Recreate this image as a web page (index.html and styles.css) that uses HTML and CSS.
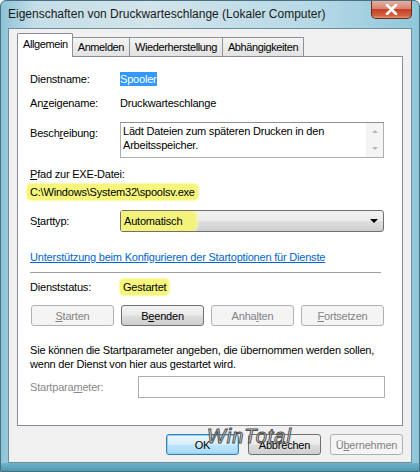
FILE: index.html
```html
<!DOCTYPE html>
<html>
<head>
    <link rel="stylesheet" href="styles.css">
</head>
<body>
    <div class="window">
        <div class="titlebar">
            <span class="title">Eigenschaften von Druckwarteschlange (Lokaler Computer)</span>
            <button class="close-btn">
                <svg width="13" height="11" viewBox="0 0 13 11">
                    <path d="M2 1 L11 10 M11 1 L2 10" stroke="#fff" stroke-width="2.6" stroke-linecap="round"/>
                </svg>
            </button>
        </div>

        <div class="client">
            <div class="tabs">
                <div class="tab active">Allgemein</div>
                <div class="tab">Anmelden</div>
                <div class="tab">Wiederherstellung</div>
                <div class="tab">Abhängigkeiten</div>
            </div>

            <div class="panel">
                <div class="row row-name">
                    <span class="label">Dienstname:</span>
                    <span class="value"><span class="selected">Spooler</span></span>
                </div>
                <div class="row row-display">
                    <span class="label">An<u>z</u>eigename:</span>
                    <span class="value">Druckwarteschlange</span>
                </div>
                <div class="row row-desc">
                    <span class="label">Besch<u>r</u>eibung:</span>
                    <div class="textbox">
                        <div class="textbox-text">Lädt Dateien zum späteren Drucken in den Arbeitsspeicher.</div>
                        <div class="scrollbar">
                            <span class="arrow up"></span>
                            <span class="arrow down"></span>
                        </div>
                    </div>
                </div>

                <div class="path-label"><u>P</u>fad zur EXE-Datei:</div>
                <div class="path-value"><span class="marker">C:\Windows\System32\spoolsv.exe</span></div>

                <div class="row row-start">
                    <span class="label">S<u>t</u>arttyp:</span>
                    <div class="combo">
                        <span class="combo-text">Automatisch</span>
                        <span class="combo-arrow"></span>
                    </div>
                </div>

                <a class="help-link" href="#">Unterstützung beim Konfigurieren der Startoptionen für Dienste</a>
                <div class="separator"></div>

                <div class="row row-status">
                    <span class="label">Dienststatus:</span>
                    <span class="value"><span class="marker">Gestartet</span></span>
                </div>

                <div class="service-buttons">
                    <button class="btn disabled"><u>S</u>tarten</button>
                    <button class="btn">B<u>e</u>enden</button>
                    <button class="btn disabled">Anha<u>l</u>ten</button>
                    <button class="btn disabled"><u>F</u>ortsetzen</button>
                </div>

                <p class="hint">Sie können die Startparameter angeben, die übernommen werden sollen, wenn der Dienst von hier aus gestartet wird.</p>

                <div class="row row-param">
                    <span class="label disabled-text">Startpara<u>m</u>eter:</span>
                    <div class="input"></div>
                </div>
            </div>

            <div class="dialog-buttons">
                <button class="btn default">OK</button>
                <button class="btn">Abbrechen</button>
                <button class="btn disabled">Ü<u>b</u>ernehmen</button>
            </div>
        </div>

        <div class="watermark">WinTotal</div>
    </div>
</body>
</html>
```

FILE: styles.css
```css
body {
    margin: 0;
    font-family: "Liberation Sans", Arial, sans-serif;
    font-size: 12px;
    color: #000;
}
.window {
    position: relative;
    width: 420px;
    height: 472px;
    box-sizing: border-box;
    padding: 0 7px 8px 7px;
    background: linear-gradient(90deg, #8cc3d6 0%, #c4dee8 8%, #d3e4ea 35%, #b6d9e6 75%, #8fc7da 100%);
    border: 1px solid #4a6f80;
    border-radius: 6px 6px 0 0;
    display: flex;
    flex-direction: column;
    overflow: hidden;
}
.window::after {
    content: "";
    position: absolute;
    left: 0;
    right: 0;
    bottom: 0;
    height: 8px;
    background: linear-gradient(180deg, #6fb4c9, #4f97b0);
}
.titlebar {
    height: 27px;
    display: flex;
    align-items: flex-start;
    justify-content: space-between;
}
.title {
    margin-top: 6px;
    font-size: 12px;
    color: #1a1a1a;
}
.close-btn {
    width: 41px;
    height: 18px;
    margin-right: 0;
    border: 1px solid #6b2a20;
    border-top: none;
    border-radius: 0 0 5px 5px;
    background: linear-gradient(180deg, #e6b0a2 0%, #d98571 45%, #c5412a 50%, #d0603f 85%, #e39a6e 100%);
    display: flex;
    align-items: center;
    justify-content: center;
    padding: 0;
}
.client {
    flex: 1;
    background: #f0f0f0;
    border: 1px solid #6d8e9b;
    padding: 4px 8px 0 8px;
    display: flex;
    flex-direction: column;
    position: relative;
    z-index: 1;
    font-size: 11px;
    letter-spacing: -0.2px;
}
.tabs {
    display: flex;
    align-items: flex-end;
    height: 23px;
    position: relative;
    z-index: 2;
    letter-spacing: -0.4px;
}
.tab {
    height: 18px;
    line-height: 18px;
    padding: 0 5px;
    border: 1px solid #8e9198;
    border-bottom: none;
    margin-left: -1px;
    background: linear-gradient(180deg, #f4f4f4, #e2e2e2);
    color: #000;
}
.tab.active {
    height: 23px;
    line-height: 20px;
    margin-left: 0;
    margin-bottom: -1px;
    padding: 0 4px 0 5px;
    background: #fff;
    border-color: #898c95;
    border-radius: 2px 2px 0 0;
}
.panel {
    height: 370px;
    box-sizing: border-box;
    background: #fff;
    border: 1px solid #898c95;
    padding: 14px 18px 0 12px;
}
.row {
    display: flex;
    align-items: center;
}
.label {
    width: 90px;
    flex: none;
    line-height: 16px;
}
.value {
    line-height: 16px;
}
.row-display {
    margin-top: 8px;
}
.selected {
    background: #3399ff;
    color: #fff;
    padding: 1px 0;
}
.row-desc {
    margin-top: 11px;
    align-items: flex-start;
}
.row-desc .label {
    margin-top: 3px;
}
.textbox {
    flex: 1;
    height: 36px;
    box-sizing: border-box;
    border: 1px solid #abadb3;
    border-top-color: #8e8f8f;
    display: flex;
}
.textbox-text {
    flex: 1;
    padding: 1px 2px;
    line-height: 14px;
}
.scrollbar {
    width: 17px;
    background: #f4f4f4;
    display: flex;
    flex-direction: column;
    justify-content: space-around;
    align-items: center;
}
.arrow {
    width: 0;
    height: 0;
    border-left: 3px solid transparent;
    border-right: 3px solid transparent;
}
.arrow.up {
    border-bottom: 3px solid #b8b8b8;
}
.arrow.down {
    border-top: 3px solid #b8b8b8;
}
.path-label {
    margin-top: 7px;
    line-height: 18px;
}
.path-value {
    line-height: 18px;
    margin-left: -3px;
}
.marker {
    background: #f6f67c;
    padding: 2px 3px;
    border-radius: 4px;
    box-shadow: 0 0 2px 1px #f8f8a8;
}
.row-start {
    margin-top: 9px;
}
.combo {
    flex: 1;
    height: 22px;
    box-sizing: border-box;
    border: 1px solid #707070;
    border-radius: 3px;
    background: linear-gradient(180deg, #f2f2f2 0%, #ebebeb 48%, #dddddd 52%, #cfcfcf 100%);
    display: flex;
    align-items: center;
    justify-content: space-between;
    overflow: hidden;
}
.combo-text {
    height: 100%;
    line-height: 20px;
    padding: 0 14px 0 3px;
    background: #f3f37c;
    border-radius: 0 6px 6px 0;
    box-shadow: 0 0 3px 2px #f6f6a6;
}
.combo-arrow {
    width: 0;
    height: 0;
    margin-right: 5px;
    border-left: 4px solid transparent;
    border-right: 4px solid transparent;
    border-top: 4px solid #000;
}
.help-link {
    display: block;
    margin-top: 17px;
    line-height: 16px;
    color: #0066cc;
    text-decoration: underline;
}
.separator {
    margin-top: 7px;
    margin-right: 3px;
    height: 1px;
    background: #a0a0a0;
}
.row-status {
    margin-top: 6px;
}
.service-buttons {
    margin-top: 10px;
    display: flex;
    justify-content: space-between;
    padding-left: 1px;
}
.btn {
    font-family: inherit;
    font-size: 11px;
    letter-spacing: -0.2px;
    height: 21px;
    width: 83px;
    padding: 0;
    border: 1px solid #707070;
    border-radius: 3px;
    background: linear-gradient(180deg, #f2f2f2 0%, #ebebeb 48%, #dddddd 52%, #cfcfcf 100%);
    color: #000;
}
.btn.disabled {
    border-color: #adb2b5;
    background: #f4f4f4;
    color: #838383;
}
.btn.default {
    border-color: #3c7fb1;
    background: linear-gradient(180deg, #eaf6fd 0%, #d9f0fc 48%, #bee6fd 52%, #a7d9f5 100%);
    box-shadow: inset 0 0 0 1px #8ed0f0;
}
.hint {
    margin: 17px 0 0 0;
    line-height: 14px;
}
.row-param {
    margin-top: 5px;
}
.row-param .label {
    width: 108px;
}
.disabled-text {
    color: #8a8a8a;
}
.input {
    flex: 1;
    height: 22px;
    box-sizing: border-box;
    border: 1px solid #abadb3;
    margin-right: -1px;
}
.dialog-buttons {
    margin-top: 8px;
    display: flex;
    justify-content: flex-end;
    gap: 9px;
}
.dialog-buttons .btn {
    width: 73px;
}
.watermark {
    position: absolute;
    left: 206px;
    top: 424px;
    z-index: 3;
    font-family: "Liberation Sans", sans-serif;
    font-style: italic;
    font-size: 20px;
    letter-spacing: 1px;
    color: rgba(255, 255, 255, 0.8);
    -webkit-text-stroke: 1px #4a4a4a;
}
```
